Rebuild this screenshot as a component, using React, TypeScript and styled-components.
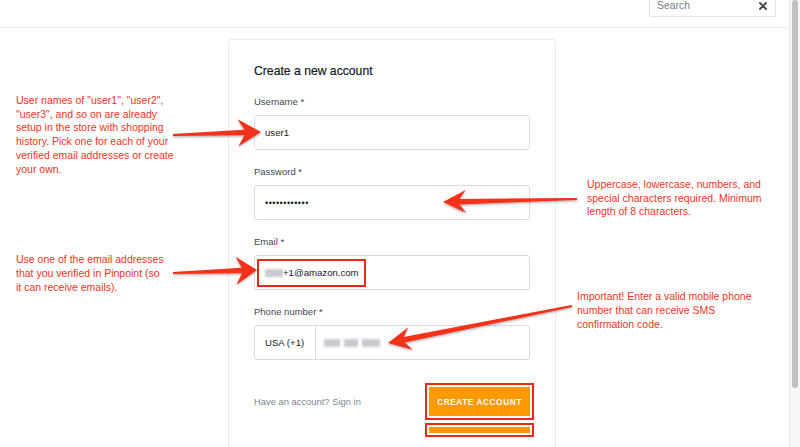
import React from "react";
import styled, { createGlobalStyle } from "styled-components";

const GlobalStyle = createGlobalStyle`
  html, body { margin: 0; padding: 0; background: #ffffff; overflow: hidden; }
  body { font-family: "Liberation Sans", Arial, Helvetica, sans-serif; }
  * { box-sizing: border-box; }
`;

const Page = styled.div`
  display: flex;
  width: 800px;
  height: 447px;
  overflow: hidden;
`;

const Main = styled.div`
  position: relative;
  flex: 1;
  display: flex;
  flex-direction: column;
  min-width: 0;
`;

const Header = styled.header`
  height: 28px;
  flex: none;
  border-bottom: 1px solid #ededed;
  display: flex;
  justify-content: flex-end;
  align-items: flex-start;
  padding-right: 13px;
`;

const SearchBox = styled.div`
  width: 127px;
  height: 24px;
  margin-top: -7px;
  border: 1px solid #dde3e8;
  border-radius: 2px;
  display: flex;
  align-items: center;
  justify-content: space-between;
  padding: 1px 8px 0 7px;
  font-size: 10.4px;
  color: #7d7d7d;
  background: #fff;
`;

const Content = styled.div`
  flex: 1;
  display: grid;
  grid-template-columns: 228px 328px 1fr;
  min-height: 0;
`;

const SideColumn = styled.div`
  display: flex;
  flex-direction: column;
`;

const Note = styled.p<{ $top: number; $left: number }>`
  margin: ${(p) => p.$top}px 0 0 ${(p) => p.$left}px;
  font-size: 10.5px;
  line-height: 13.7px;
  color: #f2331d;
  white-space: nowrap;
`;

const Card = styled.section`
  margin-top: 11px;
  height: 460px;
  border: 1px solid #ececec;
  border-radius: 3px;
  box-shadow: 0 0 2px rgba(0, 0, 0, 0.04);
  padding: 23px 25px 0 25px;
  display: flex;
  flex-direction: column;
`;

const Title = styled.h2`
  margin: 0;
  font-size: 12.2px;
  line-height: 16px;
  font-weight: 400;
  color: #16191f;
  -webkit-text-stroke: 0.2px #16191f;
`;

const Field = styled.div<{ $first?: boolean }>`
  display: flex;
  flex-direction: column;
  gap: 7px;
  margin-top: ${(p) => (p.$first ? 17 : 16)}px;
`;

const Label = styled.label`
  font-size: 9.5px;
  line-height: 12px;
  color: #3f4750;
`;

const InputBox = styled.div`
  height: 35px;
  border: 1px solid #dadcdf;
  border-radius: 3px;
  display: flex;
  align-items: center;
  padding-left: 10px;
  font-size: 9.6px;
  color: #16191f;
  background: #fff;
`;

const Dots = styled.span`
  font-size: 9px;
  letter-spacing: 0.5px;
`;

const Highlight = styled.span`
  display: inline-flex;
  align-items: center;
  height: 28px;
  margin-left: -8px;
  padding: 0 5px 0 6px;
  border: 2px solid #e8291c;
`;

const Blur = styled.span<{ $w: number }>`
  display: inline-block;
  width: ${(p) => p.$w}px;
  height: 8px;
  background: #c7cbd1;
  filter: blur(1.3px);
`;

const BlurGroup = styled.span`
  display: inline-flex;
  gap: 4px;
  align-items: center;
`;

const PhoneBox = styled(InputBox)`
  padding-left: 0;
`;

const Country = styled.span`
  width: 61px;
  height: 100%;
  display: flex;
  align-items: center;
  padding-left: 10px;
  border-right: 1px solid #dadcdf;
  flex: none;
`;

const PhoneValue = styled.span`
  padding-left: 8px;
  display: flex;
  align-items: center;
`;

const Footer = styled.div`
  margin-top: 27px;
  display: flex;
  align-items: center;
  justify-content: space-between;
`;

const SignIn = styled.span`
  font-size: 9.4px;
  color: #7b8591;
`;

const Button = styled.button<{ $stub?: boolean }>`
  width: 101px;
  height: ${(p) => (p.$stub ? 6 : 29)}px;
  border: none;
  border-radius: 0;
  background: #ff9900;
  color: #fff;
  font-family: inherit;
  font-size: 8.3px;
  font-weight: 700;
  letter-spacing: 0.55px;
  outline: 2px solid #e8291c;
  outline-offset: 2px;
  padding: 0;
  align-self: flex-end;
  margin-top: ${(p) => (p.$stub ? 11 : 0)}px;
  flex: none;
`;

const Scrollbar = styled.aside`
  width: 11px;
  flex: none;
  background: #f7f7f7;
  border-left: 1px solid #e6e6e6;
  padding-left: 2px;
`;

const Thumb = styled.div`
  width: 6px;
  height: 388px;
  border-radius: 3px;
  background: #c1c1c1;
`;

const Overlay = styled.svg`
  position: absolute;
  left: 0;
  top: 0;
  width: 789px;
  height: 447px;
  pointer-events: none;
`;

type Pt = [number, number];
type ArrowSpec = { tail: Pt; tip: Pt; len: number; half: number; w0: number; w1: number };

function arrowPoints(a: ArrowSpec): string {
  const dx = a.tip[0] - a.tail[0];
  const dy = a.tip[1] - a.tail[1];
  const L = Math.hypot(dx, dy);
  const d: Pt = [dx / L, dy / L];
  const n: Pt = [-d[1], d[0]];
  const at = (base: Pt, back: number, side: number): Pt => [
    base[0] - d[0] * back + n[0] * side,
    base[1] - d[1] * back + n[1] * side,
  ];
  const pts: Pt[] = [
    at(a.tail, 0, a.w0 / 2),
    at(a.tip, a.len * 0.72, a.w1 / 2),
    at(a.tip, a.len, a.half),
    a.tip,
    at(a.tip, a.len, -a.half),
    at(a.tip, a.len * 0.72, -a.w1 / 2),
    at(a.tail, 0, -a.w0 / 2),
  ];
  return pts.map((p) => `${p[0].toFixed(1)},${p[1].toFixed(1)}`).join(" ");
}

const arrows: ArrowSpec[] = [
  { tail: [173, 135], tip: [261, 132], len: 23, half: 13.5, w0: 2, w1: 5.5 },
  { tail: [577, 199], tip: [443, 202], len: 23, half: 11.5, w0: 2, w1: 5.5 },
  { tail: [173, 273], tip: [257, 270], len: 21, half: 14, w0: 2, w1: 5.5 },
  { tail: [572, 306], tip: [388, 343], len: 23, half: 11.5, w0: 2, w1: 5.5 },
];

function Arrows() {
  return (
    <Overlay viewBox="0 0 789 447">
      <defs>
        <filter id="arrowShadow" x="-10%" y="-30%" width="120%" height="160%">
          <feDropShadow dx="0" dy="1.2" stdDeviation="1.2" floodColor="#000" floodOpacity="0.35" />
        </filter>
      </defs>
      {arrows.map((a, i) => (
        <polygon key={i} points={arrowPoints(a)} fill="#f4301a" filter="url(#arrowShadow)" />
      ))}
    </Overlay>
  );
}

function CloseIcon() {
  return (
    <svg width="8" height="8" viewBox="0 0 8 8">
      <path d="M1 1 L7 7 M7 1 L1 7" stroke="#4a4a4a" strokeWidth="1.9" strokeLinecap="round" />
    </svg>
  );
}

export default function App() {
  return (
    <>
      <GlobalStyle />
      <Page>
        <Main>
          <Header>
            <SearchBox>
              <span>Search</span>
              <CloseIcon />
            </SearchBox>
          </Header>
          <Content>
            <SideColumn>
              <Note $top={66} $left={16}>
                User names of "user1", "user2",
                <br />
                "user3", and so on are already
                <br />
                setup in the store with shopping
                <br />
                history. Pick one for each of your
                <br />
                verified email addresses or create
                <br />
                your own.
              </Note>
              <Note $top={77} $left={16}>
                Use one of the email addresses
                <br />
                that you verified in Pinpoint (so
                <br />
                it can receive emails).
              </Note>
            </SideColumn>

            <Card>
              <Title>Create a new account</Title>
              <Field $first>
                <Label>Username *</Label>
                <InputBox>user1</InputBox>
              </Field>
              <Field>
                <Label>Password *</Label>
                <InputBox>
                  <Dots>••••••••••••</Dots>
                </InputBox>
              </Field>
              <Field>
                <Label>Email *</Label>
                <InputBox>
                  <Highlight>
                    <Blur $w={18} />
                    +1@amazon.com
                  </Highlight>
                </InputBox>
              </Field>
              <Field>
                <Label>Phone number *</Label>
                <PhoneBox>
                  <Country>USA (+1)</Country>
                  <PhoneValue>
                    <BlurGroup>
                      <Blur $w={16} />
                      <Blur $w={14} />
                      <Blur $w={18} />
                    </BlurGroup>
                  </PhoneValue>
                </PhoneBox>
              </Field>
              <Footer>
                <SignIn>Have an account? Sign in</SignIn>
                <Button>CREATE ACCOUNT</Button>
              </Footer>
              <Button $stub aria-hidden="true" />
            </Card>

            <SideColumn>
              <Note $top={150} $left={31}>
                Uppercase, lowercase, numbers, and
                <br />
                special characters required. Minimum
                <br />
                length of 8 characters.
              </Note>
              <Note $top={71} $left={21}>
                Important! Enter a valid mobile phone
                <br />
                number that can receive SMS
                <br />
                confirmation code.
              </Note>
            </SideColumn>
          </Content>
          <Arrows />
        </Main>
        <Scrollbar>
          <Thumb />
        </Scrollbar>
      </Page>
    </>
  );
}
